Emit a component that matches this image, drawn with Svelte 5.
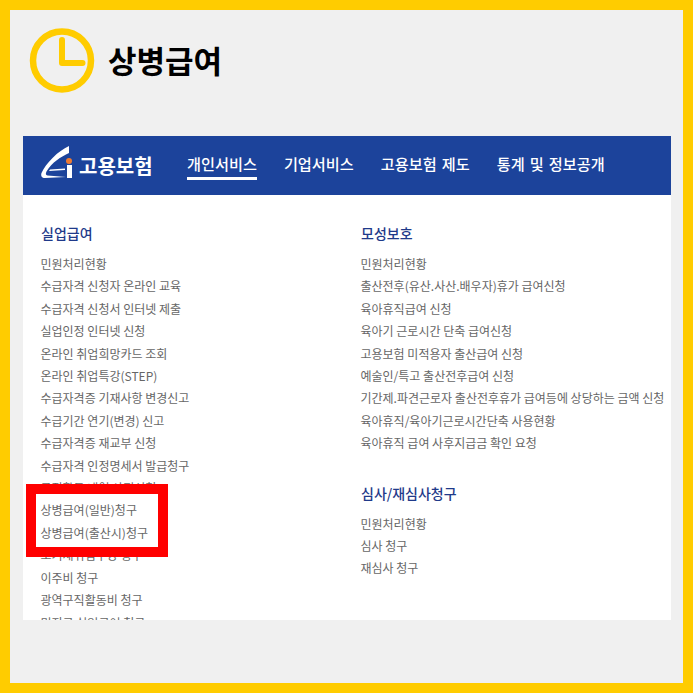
<script>
    const nav = ["개인서비스", "기업서비스", "고용보험 제도", "통계 및 정보공개"];

    const leftCol = [
        {
            title: "실업급여",
            items: [
                "민원처리현황",
                "수급자격 신청자 온라인 교육",
                "수급자격 신청서 인터넷 제출",
                "실업인정 인터넷 신청",
                "온라인 취업희망카드 조회",
                "온라인 취업특강(STEP)",
                "수급자격증 기재사항 변경신고",
                "수급기간 연기(변경) 신고",
                "수급자격증 재교부 신청",
                "수급자격 인정명세서 발급청구",
                "구직활동 내역 사전신청",
                "상병급여(일반)청구",
                "상병급여(출산시)청구",
                "조기재취업수당 청구",
                "이주비 청구",
                "광역구직활동비 청구",
                "미지급 실업급여 청구",
            ],
        },
    ];

    const rightCol = [
        {
            title: "모성보호",
            items: [
                "민원처리현황",
                "출산전후(유산.사산.배우자)휴가 급여신청",
                "육아휴직급여 신청",
                "육아기 근로시간 단축 급여신청",
                "고용보험 미적용자 출산급여 신청",
                "예술인/특고 출산전후급여 신청",
                "기간제.파견근로자 출산전후휴가 급여등에 상당하는 금액 신청",
                "육아휴직/육아기근로시간단축 사용현황",
                "육아휴직 급여 사후지급금 확인 요청",
            ],
        },
        {
            title: "심사/재심사청구",
            items: ["민원처리현황", "심사 청구", "재심사 청구"],
        },
    ];
</script>

{#snippet column(sections)}
    <div class="col">
        {#each sections as section}
            <section>
                <h2>{section.title}</h2>
                <ul>
                    {#each section.items as item}
                        <li>{item}</li>
                    {/each}
                </ul>
            </section>
        {/each}
    </div>
{/snippet}

<div class="frame">
    <header class="title">
        <svg class="clock" width="66" height="66" viewBox="0 0 66 66" aria-hidden="true">
            <circle cx="33" cy="32.500" r="29" fill="none" stroke="#ffcc00" stroke-width="6.500" />
            <path d="M33 12V35H53.500" fill="none" stroke="#ffcc00" stroke-width="6" stroke-linecap="round" stroke-linejoin="round" />
        </svg>
        <h1>상병급여</h1>
    </header>

    <div class="panel">
        <nav>
            <div class="logo">
                <svg width="32" height="39" viewBox="0 0 32 39" aria-hidden="true">
                    <path d="M28 0C17 5 5 17 0.500 27C-0.500 30 1 32 4 32L25 31L6.500 29.500C4.500 29 4.500 27.500 5.500 25.500C11 16 20 11 28 7Z" fill="#fff" />
                    <path d="M9 23.500L24 22.500V24L8 25Z" fill="#fff" />
                    <rect x="26" y="19" width="5" height="13" fill="#fff" />
                    <circle cx="28" cy="15" r="3" fill="#ee7a33" />
                </svg>
                <span>고용보험</span>
            </div>
            <ul class="menu">
                {#each nav as label, i}
                    <li class:active={i === 0}>{label}</li>
                {/each}
            </ul>
        </nav>

        <div class="columns">
            {@render column(leftCol)}
            {@render column(rightCol)}
        </div>

        <div class="highlight"></div>
    </div>
</div>

<style>
    :global(body) {
        margin: 0;
    }

    .frame {
        box-sizing: border-box;
        width: 693px;
        height: 693px;
        border: 10px solid #ffcc00;
        background: #f0f0f0;
        padding: 18px 12px 0 13px;
        font-family: "Noto Sans CJK KR", "Noto Sans", sans-serif;
    }

    .title {
        display: flex;
        align-items: center;
        gap: 13px;
        height: 66px;
        margin-left: 6px;
        margin-bottom: 42px;
    }

    h1 {
        margin: -2px 0 0;
        font-size: 31px;
        line-height: 40px;
        font-weight: 700;
        color: #000;
    }

    .panel {
        position: relative;
        height: 484px;
        overflow: hidden;
        background: #fff;
    }

    nav {
        display: flex;
        align-items: center;
        height: 59px;
        padding-left: 18px;
        background: #1c439b;
        color: #fff;
    }

    .logo {
        display: flex;
        align-items: center;
        gap: 6px;
        width: 146px;
        font-size: 20px;
        font-weight: 700;
    }

    .logo svg {
        flex: none;
        overflow: visible;
    }

    .menu {
        display: flex;
        gap: 27px;
        margin: 0;
        padding: 0;
        list-style: none;
        font-size: 15.200px;
        font-weight: 500;
        word-spacing: 1.700px;
    }

    .menu li {
        padding-bottom: 3px;
        border-bottom: 3px solid transparent;
        line-height: 22px;
    }

    .menu li.active {
        border-bottom-color: #fff;
    }

    .columns {
        display: grid;
        grid-template-columns: 320px 1fr;
        padding: 27px 0 0 18px;
    }

    section + section {
        margin-top: 27px;
    }

    h2 {
        margin: 0 0 9px;
        font-size: 14px;
        line-height: 22px;
        font-weight: 500;
        color: #1f3a8a;
    }

    .col ul {
        margin: 0 0 0 -0.500px;
        padding: 0;
        list-style: none;
    }

    .col li {
        font-size: 12px;
        line-height: 22.400px;
        color: #666;
        white-space: nowrap;
    }

    .highlight {
        position: absolute;
        left: 3px;
        top: 348px;
        box-sizing: border-box;
        width: 142px;
        height: 73px;
        border: 10px solid #f00;
    }
</style>
